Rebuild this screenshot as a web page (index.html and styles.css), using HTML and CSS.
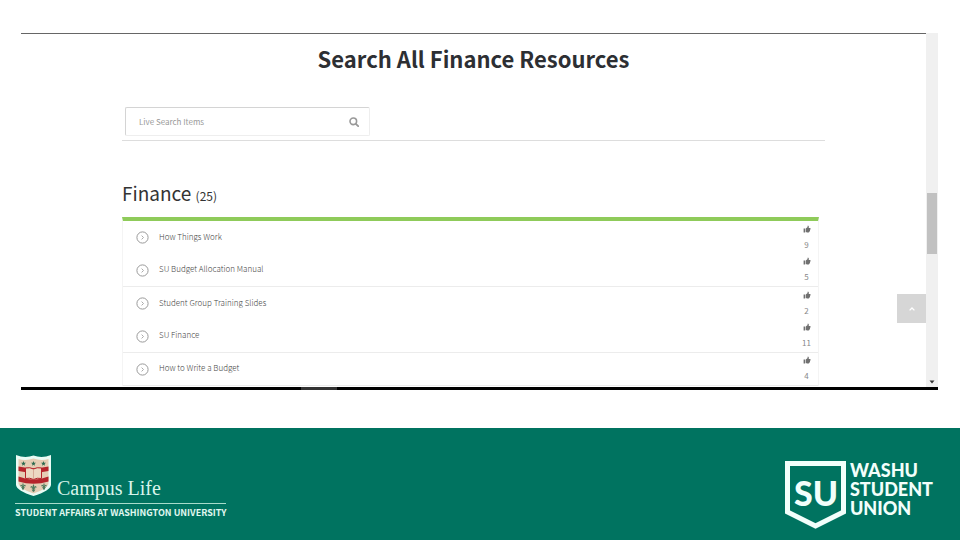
FILE: index.html
```html
<!DOCTYPE html>
<html lang="en">

<head>
  <meta charset="UTF-8">
  <meta name="viewport" content="width=device-width, initial-scale=1.0">
  <title>Search All Finance Resources</title>

  <link rel="stylesheet" href="styles.css">
</head>

<body>
  <!-- Shapes that are used more than once -->
  <svg class="symbols" aria-hidden="true">
    <symbol id="arrow" viewBox="0 0 13 13">
      <circle cx="6.5" cy="6.5" r="5.6" fill="none" stroke="#999" />
      <path d="M5.6 4.6 7.5 6.5 5.6 8.4" fill="none" stroke="#aaa" />
    </symbol>
    <symbol id="thumb" viewBox="0 0 8 8">
      <path d="M0.6 3.6H2.2V7.4H0.6ZM2.8 3.6 4.4 2.2 4.8 0.6Q6.2 0.6 5.8 2.9H7.4Q7.8 3.4 7.3 4 7.6 4.7 7 5.2 7.2 6 6.6 6.3 6.6 7.3 5.6 7.4H4.2L2.8 6.9Z" fill="#707070" />
    </symbol>
    <symbol id="star" viewBox="0 0 10 10">
      <path d="M5 0 6.3 3.5 10 3.7 7.1 6 8.1 9.6 5 7.5 1.9 9.6 2.9 6 0 3.7 3.7 3.5Z" fill="#2c6b50" />
    </symbol>
    <symbol id="lily" viewBox="0 0 10 12">
      <path d="M5 0Q7 3 5.6 6Q6.5 2.8 8.6 3.2Q10.4 4.4 8.8 6Q8.4 4.8 7.4 5.4L6.6 7H8V8H6.2L7.2 10 5 12 2.8 10 3.8 8H2V7H3.4L2.6 5.4Q1.6 4.8 1.2 6Q-.4 4.4 1.4 3.2Q3.5 2.8 4.4 6Q3 3 5 0Z" fill="#4b7a5c" />
    </symbol>
  </svg>

  <!-- The browser window -->
  <div class="window">
    <main class="page">
      <h1>Search All Finance Resources</h1>

      <form class="search">
        <div class="search-box">
          <input type="text" id="search" placeholder="Live Search Items" aria-label="Live Search Items">
          <button type="submit" class="search-button" aria-label="Search">
            <svg width="10" height="10" viewBox="0 0 10 10">
              <circle cx="4.3" cy="4.3" r="3.3" fill="none" stroke="#999" stroke-width="1.6" />
              <path d="M6.8 6.8 9.2 9.2" stroke="#999" stroke-width="1.8" stroke-linecap="round" />
            </svg>
          </button>
        </div>
      </form>

      <h2>Finance <small>(25)</small></h2>

      <ul class="items">
        <li>
          <svg class="arrow"><use href="#arrow" /></svg>
          <a href="#">How Things Work</a>
          <div class="likes"><svg><use href="#thumb" /></svg><span>9</span></div>
        </li>
        <li>
          <svg class="arrow"><use href="#arrow" /></svg>
          <a href="#">SU Budget Allocation Manual</a>
          <div class="likes"><svg><use href="#thumb" /></svg><span>5</span></div>
        </li>
        <li>
          <svg class="arrow"><use href="#arrow" /></svg>
          <a href="#">Student Group Training Slides</a>
          <div class="likes"><svg><use href="#thumb" /></svg><span>2</span></div>
        </li>
        <li>
          <svg class="arrow"><use href="#arrow" /></svg>
          <a href="#">SU Finance</a>
          <div class="likes"><svg><use href="#thumb" /></svg><span>11</span></div>
        </li>
        <li>
          <svg class="arrow"><use href="#arrow" /></svg>
          <a href="#">How to Write a Budget</a>
          <div class="likes"><svg><use href="#thumb" /></svg><span>4</span></div>
        </li>
      </ul>

      <button type="button" class="to-top" aria-label="Back to top">
        <svg width="6" height="4" viewBox="0 0 6 4">
          <path d="M0.6 3.4 3 1 5.4 3.4" fill="none" stroke="#fff" stroke-width="1.3" />
        </svg>
      </button>
    </main>

    <div class="scrollbar">
      <div class="scroll-thumb"></div>
      <svg class="scroll-down" width="6" height="4" viewBox="0 0 6 4">
        <path d="M0.5 0.5H5.5L3 3.5Z" fill="#333" />
      </svg>
    </div>
  </div>
  <div class="taskbar"><div class="task"></div></div>

  <!-- The green band with the two logos -->
  <footer>
    <div class="campus-life">
      <div class="campus-name">
        <svg width="37" height="43" viewBox="0 0 37 43">
          <path d="M1 1Q10 4.5 18.5 1.5Q27 4.5 36 1V31Q35 37 18.5 42Q2 37 1 31Z" fill="#e9fbf4" />
          <path d="M3.5 5Q11 7 18.5 4.5Q26 7 33.5 5V30Q32 35 18.5 39.5Q5 35 3.5 30Z" fill="#e5cdb4" />
          <path d="M3.5 12.5Q18.5 15.5 33.5 12.5V17Q18.5 20 3.5 17ZM3.5 22.5Q18.5 28.5 33.5 22.5V27.5Q18.5 32 3.5 27.5Z" fill="#b5242b" />
          <path d="M10.5 14Q15 13 18.5 15Q22 13 26.5 14V24.5Q22 23.5 18.5 25.5Q15 23.5 10.5 24.5Z" fill="#ecd8c2" stroke="#b5242b" />
          <path d="M18.5 15V25" stroke="#c98d7b" stroke-width="0.6" />
          <use href="#star" x="6" y="7" width="5" height="5" />
          <use href="#star" x="16" y="7" width="5" height="5" />
          <use href="#star" x="26" y="7" width="5" height="5" />
          <use href="#lily" x="5" y="29" width="6" height="7" />
          <use href="#lily" x="15" y="30" width="7" height="8" />
          <use href="#lily" x="26" y="29" width="6" height="7" />
        </svg>
        <span>Campus Life</span>
      </div>
      <div class="campus-unit">STUDENT AFFAIRS AT WASHINGTON UNIVERSITY</div>
    </div>

    <div class="union">
      <div class="union-badge">
        <svg width="62" height="68" viewBox="0 0 62 68">
          <path d="M2.5 2.5H58.5V51L30.5 65 2.5 51Z" fill="none" stroke="#f2fffb" stroke-width="5" />
        </svg>
        <span>SU</span>
      </div>
      <div class="union-name">WASHU<br>STUDENT<br>UNION</div>
    </div>
  </footer>
</body>

</html>
```

FILE: styles.css
```css
body {
  margin: 0;
  min-height: 100vh;
  display: flex;
  flex-direction: column;
  background-color: #fff;
  font-family: "Noto Sans CJK SC", "Open Sans", sans-serif;
}

.symbols {
  position: absolute;
  width: 0;
  height: 0;
}

/* Browser window */
.window {
  display: flex;
  margin: 33px 22px 0 21px;
}

.page {
  flex: 1;
  position: relative;
  padding: 6px 101px 1px;
  border-top: 1px solid #666;
}

h1 {
  margin: 0;
  font-size: 22px;
  line-height: 36px;
  font-weight: 700;
  color: #2d2f33;
  text-align: center;
}

/* Search field with the line under it */
.search {
  margin-top: 31px;
  padding: 0 3px 4px;
  border-bottom: 1px solid #ddd;
}

.search-box {
  display: flex;
  align-items: center;
  box-sizing: border-box;
  width: 245px;
  height: 29px;
  border: 1px solid #d4d4d4;
  border-right-color: #eee;
  border-bottom-color: #eee;
  border-radius: 2px;
}

.search-box input {
  flex: 1;
  min-width: 0;
  padding: 0 0 0 13px;
  border: 0;
  outline: 0;
  background: none;
  font-family: inherit;
  font-size: 8px;
  line-height: 16px;
  color: #666;
}

.search-box input::placeholder {
  color: #999;
}

.search-button {
  display: flex;
  padding: 0 10px;
  border: 0;
  background: none;
}

/* Section heading */
h2 {
  margin: 37px 0 6px;
  font-size: 19px;
  line-height: 30px;
  font-weight: 400;
  color: #333;
}

h2 small {
  font-size: 12px;
}

/* List of resources */
.items {
  list-style: none;
  margin: 0 6px 0 0;
  padding: 0;
  border: 1px solid #f4f4f4;
  border-width: 0 1px;
  border-top: 4px solid #8fcb5a;
}

.items li {
  display: flex;
  align-items: center;
  box-sizing: border-box;
  height: 33px;
  padding: 0 7px 0 13px;
}

.items li:nth-child(even),
.items li:last-child {
  border-bottom: 1px solid #ececec;
}

.items a {
  flex: 1;
  margin-left: 10px;
  padding-bottom: 2px;
  font-size: 8px;
  line-height: 16px;
  font-weight: 300;
  color: #444;
  text-decoration: none;
}

.arrow {
  width: 13px;
  height: 13px;
}

.likes {
  display: flex;
  flex-direction: column;
  align-items: center;
  gap: 6px;
  width: 9px;
  font-size: 8px;
  line-height: 12px;
  color: #888;
}

.likes svg {
  width: 8px;
  height: 8px;
}

/* Back to top button, lies over the page */
.to-top {
  position: absolute;
  right: 0;
  bottom: 64px;
  display: flex;
  align-items: center;
  justify-content: center;
  width: 29px;
  height: 29px;
  padding: 0;
  border: 0;
  background-color: #d6d6d6;
}

.scrollbar {
  display: flex;
  flex-direction: column;
  align-items: center;
  width: 12px;
  background-color: #f0f0f0;
}

.scroll-thumb {
  width: 10px;
  height: 61px;
  margin-top: 160px;
  background-color: #c1c1c1;
}

.scroll-down {
  margin: auto 0 3px;
}

.taskbar {
  height: 3px;
  margin: 0 22px 0 21px;
  background-color: #000;
}

.task {
  width: 36px;
  height: 3px;
  margin-left: 280px;
  background-color: #333;
}

/* Footer */
footer {
  flex: 1;
  display: flex;
  justify-content: space-between;
  align-items: flex-start;
  margin-top: 38px;
  padding: 26px 27px 10px 15px;
  background-color: #007360;
  color: #f2fffb;
}

.campus-name {
  display: flex;
  align-items: flex-end;
  gap: 5px;
  padding-bottom: 6px;
  border-bottom: 1px solid #a8dccb;
  font-family: "Liberation Serif", serif;
  font-size: 20px;
  line-height: 18px;
  color: #d9f5ec;
}

.campus-unit {
  margin-top: 3px;
  font-size: 9px;
  line-height: 12px;
  font-weight: 700;
  color: #e0f8f0;
}

.union {
  display: flex;
  gap: 3px;
  margin-top: 7px;
  font-family: Lato, sans-serif;
  font-weight: 900;
}

.union-badge {
  display: grid;
}

.union-badge svg,
.union-badge span {
  grid-area: 1 / 1;
}

.union-badge span {
  margin-top: 12px;
  font-size: 34px;
  line-height: 40px;
  text-align: center;
}

.union-name {
  font-size: 18px;
  line-height: 19px;
}
```
